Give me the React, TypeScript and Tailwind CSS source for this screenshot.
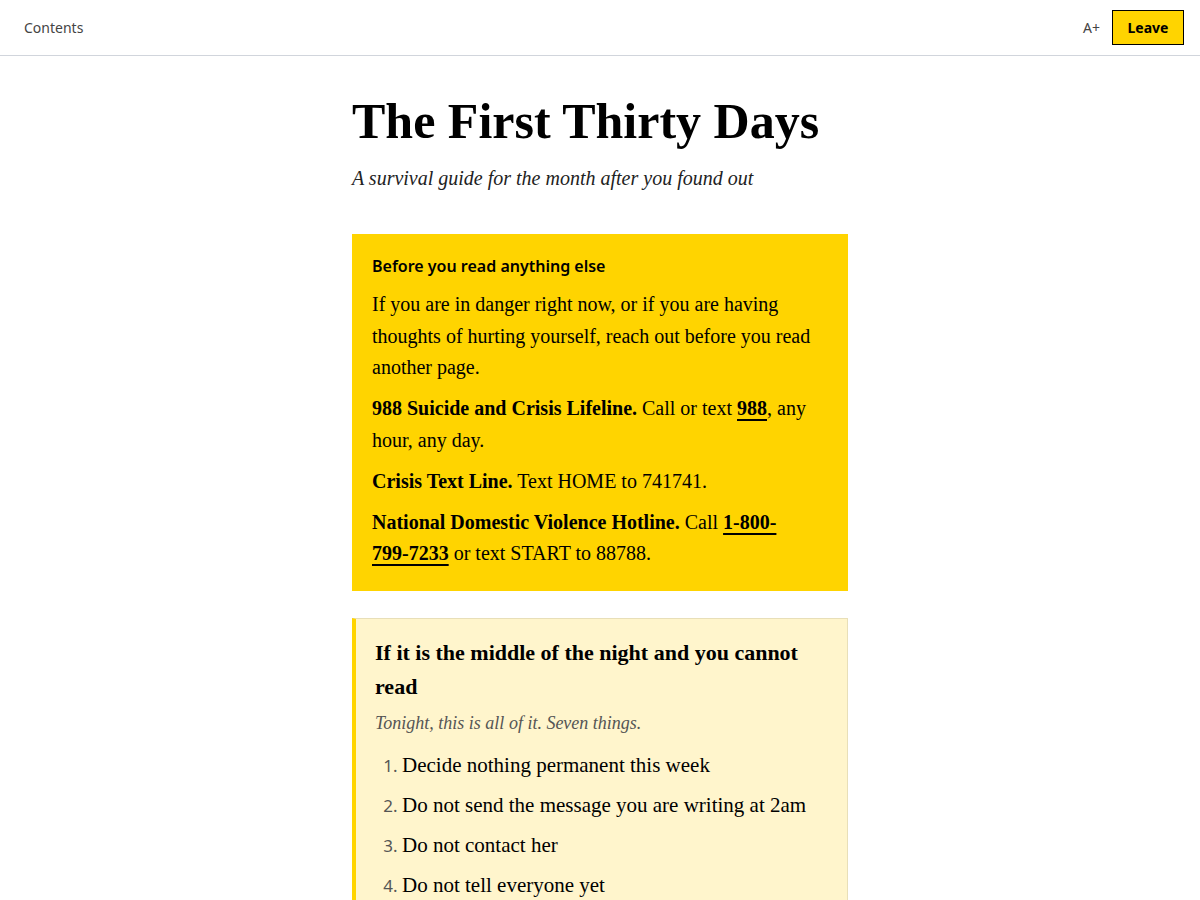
import React from 'react';

const serif = "font-['Liberation_Serif',serif]";
const sans = "font-['Noto_Sans','Open_Sans',sans-serif]";

const tonight = [
  'Decide nothing permanent this week',
  'Do not send the message you are writing at 2am',
  'Do not contact her',
  'Do not tell everyone yet',
  'Eat something, even if it is toast',
  'Drink a glass of water',
  'Try to lie down, even if you cannot sleep',
];

export default function App() {
  return (
    <div className="min-h-screen bg-white text-black">
      <header className={`flex h-14 items-center justify-between border-b border-gray-300 pl-6 pr-4 ${sans}`}>
        <button className="text-sm text-[#444]">Contents</button>
        <div className="flex items-center gap-3">
          <button className="text-sm text-[#444]">A+</button>
          <button className="h-[35px] w-[72px] border border-black bg-[#ffd400] text-sm font-bold">Leave</button>
        </div>
      </header>

      <main className={`mx-auto w-[496px] pt-[34px] pb-16 ${serif}`}>
        <h1 className="text-[50px] font-bold leading-[62px]">The First Thirty Days</h1>
        <p className="mt-[11px] text-[20px] italic text-[#222]">A survival guide for the month after you found out</p>

        <section className="mt-[41px] bg-[#ffd400] px-5 pt-[20px] pb-[21px]">
          <h2 className={`text-base font-semibold ${sans}`}>Before you read anything else</h2>
          <div className="mt-[11px] space-y-[9.5px] text-[20px] leading-[31.5px]">
            <p>If you are in danger right now, or if you are having thoughts of hurting yourself, reach out before you read another page.</p>
            <p>
              <strong>988 Suicide and Crisis Lifeline.</strong> Call or text{' '}
              <a href="#" className="font-bold underline underline-offset-4">988</a>, any hour, any day.
            </p>
            <p>
              <strong>Crisis Text Line.</strong> Text HOME to 741741.
            </p>
            <p>
              <strong>National Domestic Violence Hotline.</strong> Call{' '}
              <a href="#" className="font-bold underline underline-offset-4">
                1-800-<span className="whitespace-nowrap">799-7233</span>
              </a>{' '}
              or text START to 88788.
            </p>
          </div>
        </section>

        <section className="mt-[27px] border border-l-4 border-[#e8dfb8] border-l-[#ffd400] bg-[#fff5cc] pl-[19px] pr-5 pt-[17px] pb-6">
          <h2 className="text-[22px] font-bold leading-[34px]">If it is the middle of the night and you cannot read</h2>
          <p className="mt-[4px] text-[18px] italic leading-[30px] text-[#555]">Tonight, this is all of it. Seven things.</p>
          <ol className="mt-[12px] list-decimal space-y-[10px] pl-[27px] marker:font-['Noto_Sans',sans-serif] marker:text-[17px] marker:text-[#555]">
            {tonight.map((item) => (
              <li key={item} className="text-[21px] leading-[30px]">
                {item}
              </li>
            ))}
          </ol>
        </section>
      </main>
    </div>
  );
}
